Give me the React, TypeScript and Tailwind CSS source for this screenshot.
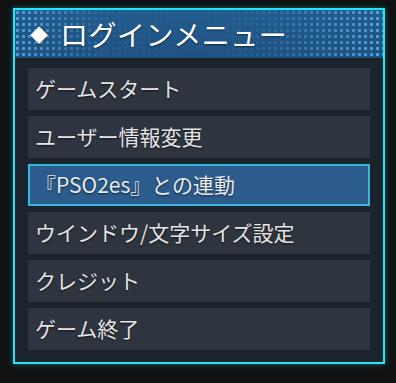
const ITEMS = [
  'ゲームスタート',
  'ユーザー情報変更',
  '『PSO2es』との連動',
  'ウインドウ/文字サイズ設定',
  'クレジット',
  'ゲーム終了',
];

const SELECTED = 2;

function Dots() {
  return (
    <svg className="absolute inset-0 h-full w-full" preserveAspectRatio="none">
      <defs>
        <pattern id="dots" width="6" height="6" patternUnits="userSpaceOnUse">
          <rect x="1" y="1" width="3" height="3" rx="0.8" fill="#63afe4" />
        </pattern>
        <linearGradient id="fade" x1="0" x2="1" y1="0" y2="0">
          <stop offset="0" stopColor="#fff" stopOpacity="0.85" />
          <stop offset="0.25" stopColor="#fff" stopOpacity="0.1" />
          <stop offset="0.5" stopColor="#fff" stopOpacity="0" />
          <stop offset="0.7" stopColor="#fff" stopOpacity="0.2" />
          <stop offset="1" stopColor="#fff" stopOpacity="0.9" />
        </linearGradient>
        <mask id="m">
          <rect width="100%" height="100%" fill="url(#fade)" />
        </mask>
      </defs>
      <rect width="100%" height="100%" fill="url(#dots)" mask="url(#m)" />
    </svg>
  );
}

export default function App() {
  return (
    <div
      className="h-[383px] w-[396px] bg-[#101112] pt-2 pl-[13px]"
      style={{ fontFamily: '"Noto Sans CJK JP", "Noto Sans", sans-serif' }}
    >
      <div className="w-[372px] border-2 border-[#22e6f6] bg-[#1b232c] shadow-[0_0_6px_rgba(34,230,246,0.35)]">
        <div className="relative h-[48px] bg-gradient-to-b from-[#225c8e] to-[#1e5282]">
          <Dots />
          <div className="relative flex h-full items-center pl-[15px] text-white [text-shadow:0_1px_2px_rgba(0,0,0,0.5)]">
            <span className="mr-[12px] text-[18px] leading-none">◆</span>
            <span className="text-[28px] leading-none tracking-[0.5px]">ログインメニュー</span>
          </div>
        </div>
        <div className="flex flex-col gap-[6px] px-[13px] pt-[10px] pb-[12px]">
          {ITEMS.map((label, i) =>
            i === SELECTED ? (
              <div
                key={label}
                className="flex h-[42px] items-center border-2 border-[#3bb5e0] bg-[#2c5c8c] pl-[5px] text-[21px] text-[#e8ecef] [text-shadow:0_1px_2px_rgba(0,0,0,0.6)]"
              >
                {label}
              </div>
            ) : (
              <div
                key={label}
                className="flex h-[42px] items-center bg-[#2f353e] pl-[7px] text-[21px] text-[#e2e4e6] [text-shadow:0_1px_2px_rgba(0,0,0,0.6)]"
              >
                {label}
              </div>
            ),
          )}
        </div>
      </div>
    </div>
  );
}
